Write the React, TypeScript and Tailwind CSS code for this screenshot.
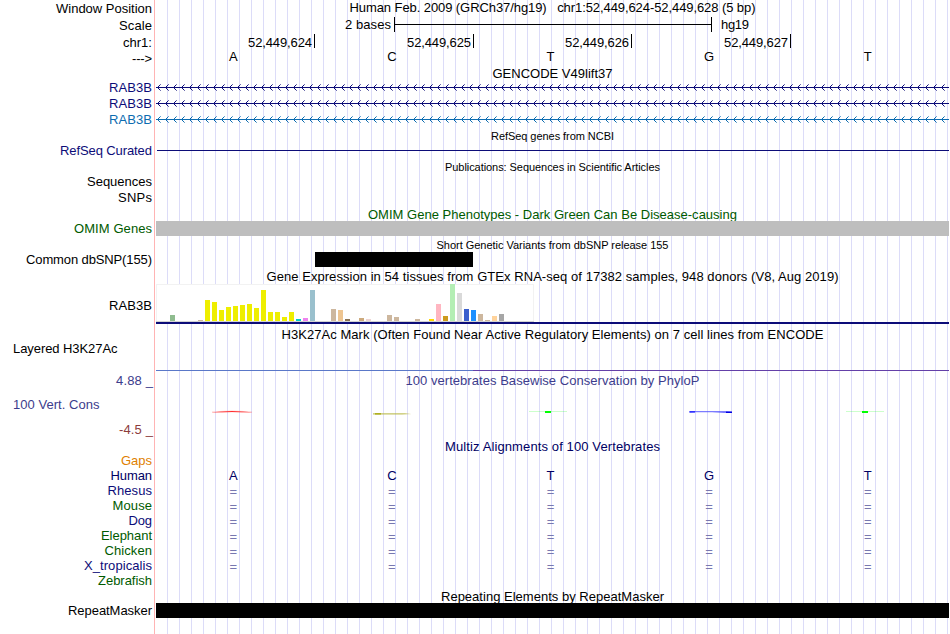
import { useLayoutEffect, useRef, type ReactNode } from "react";

/** Text whose letter spacing is adjusted so its advance equals `w` pixels. */
function Fit({ w, children, className = "" }: { w: number; children: string; className?: string }) {
  const ref = useRef<HTMLSpanElement>(null);
  useLayoutEffect(() => {
    const el = ref.current;
    if (!el) return;
    el.style.letterSpacing = "0px";
    el.style.marginRight = "0px";
    const natural = el.getBoundingClientRect().width;
    const gap = (w - natural) / (children.length - 1);
    el.style.letterSpacing = `${gap}px`;
    el.style.marginRight = `${-gap}px`;
  }, [w, children]);
  return (
    <span ref={ref} className={`inline-block shrink-0 whitespace-pre ${className}`}>
      {children}
    </span>
  );
}

type RowProps = {
  h: string;
  label?: string;
  w?: number;
  labelClass?: string;
  left?: boolean;
  clip?: boolean;
  children?: ReactNode;
};

function Row({ h, label, w = 0, labelClass = "", left = false, clip = false, children }: RowProps) {
  return (
    <div className={`flex w-[949px] shrink-0 ${h}`}>
      <div
        className={`flex w-[156px] shrink-0 items-start ${left ? "justify-start pl-[13px]" : "justify-end pr-1"} ${labelClass}`}
      >
        {label && <Fit w={w}>{label}</Fit>}
      </div>
      <div className={`flex w-[793px] shrink-0 items-start ${clip ? "overflow-hidden" : ""}`}>{children}</div>
    </div>
  );
}

function Title({ w, className = "", children }: { w: number; className?: string; children: string }) {
  return (
    <div className={`flex w-[793px] justify-center ${className}`}>
      <Fit w={w}>{children}</Fit>
    </div>
  );
}

function Bases({ items, className = "" }: { items: string[]; className?: string }) {
  return (
    <div className={`-ml-[2px] grid w-[793px] shrink-0 grid-cols-5 text-center ${className}`}>
      {items.map((b, i) => (
        <span key={i}>{b}</span>
      ))}
    </div>
  );
}

function Arrows({ color }: { color: string }) {
  const tips = Array.from({ length: 99 }, (_, i) => 1 + i * 8);
  return (
    <svg width="793" height="16" className="block" fill={color} shapeRendering="crispEdges">
      <rect x="0" y="7" width="793" height="1" />
      {tips.map((x) => (
        <g key={x}>
          <path d={`M${x + 1} 6h1v1h-1zM${x + 1} 8h1v1h-1zM${x + 2} 5h1v1h-1zM${x + 2} 9h1v1h-1z`} />
          <path d={`M${x + 3} 4h1v1h-1zM${x + 3} 10h1v1h-1z`} opacity="0.6" />
        </g>
      ))}
    </svg>
  );
}

const TAN = "#cdb79e";
const YEL = "#eeee00";
const tissues: [number, number, string][] = [
  [170, 6, "#8fbc8f"], [198, 1, TAN], [205, 21, YEL], [212, 19, YEL], [219, 11, YEL],
  [226, 14, YEL], [233, 15, YEL], [240, 16, YEL], [247, 17, YEL], [254, 13, YEL],
  [261, 31, YEL], [268, 9, YEL], [275, 9, YEL], [282, 4, YEL], [289, 9, YEL],
  [296, 2, "#00cdcd"], [303, 3, "#ee82ee"], [310, 31, "#9ac0cd"], [331, 12, TAN],
  [338, 11, "#eec591"], [345, 2, "#8b7355"], [359, 3, "#cdaa7d"], [366, 2, "#eed5d2"],
  [387, 6, TAN], [394, 4, TAN], [415, 2, TAN], [429, 2, "#ffd700"], [436, 17, "#ffb6c1"],
  [443, 5, "#cd9b1d"], [450, 37, "#b4eeb4"], [457, 28, "#d9d9d9"], [464, 12, "#3a5fcd"],
  [471, 11, "#1e90ff"], [478, 7, TAN], [485, 1, TAN], [492, 5, "#ffd39b"], [499, 7, "#a6a6a6"],
];

function Expression() {
  return (
    <svg width="793" height="41" className="block" shapeRendering="crispEdges">
      <rect x="0" y="0" width="378" height="38" fill="#f2f2f2" />
      <rect x="1" y="1" width="376" height="36" fill="#ffffff" />
      <rect x="0" y="37" width="378" height="1" fill="#d3d3d3" />
      {tissues.map(([x, h, c]) => (
        <rect key={x} x={x - 156} y={37 - h} width="5" height={h} fill={c} />
      ))}
      <rect x="0" y="38" width="793" height="2" fill="#0c0c78" />
    </svg>
  );
}

function Conservation() {
  return (
    <svg width="793" height="33" className="block">
      <path d="M56 23.2L66 22.4L76 22L86 22.4L96 23.2L86 23.2L76 22.9L66 23.3Z" fill="#ff3030" stroke="#ff3030" strokeWidth="0.2" />
      <path d="M217 24.2H255L249 25H256L246 25.5H217Z" fill="#b8b848" opacity="0.85" />
      <rect x="219" y="24" width="6" height="1.6" fill="#b0b020" />
      <rect x="373" y="22" width="38" height="1" fill="#00ff00" opacity="0.2" />
      <rect x="389" y="22" width="6" height="2" fill="#00ff00" />
      <path d="M533 22H570L576 22.4V24H568L556 23.3H539L533 23.8Z" fill="#5050ff" opacity="0.75" />
      <rect x="534" y="22" width="5" height="1.6" fill="#3030ff" />
      <rect x="570" y="22.6" width="6" height="1.4" fill="#0000e0" />
      <rect x="690" y="22" width="38" height="1" fill="#00ff00" opacity="0.2" />
      <rect x="706" y="22" width="6" height="2" fill="#00ff00" />
    </svg>
  );
}

const positions: [string, string][] = [
  ["52,449,624", "w-[159px]"],
  ["52,449,625", "w-[159px]"],
  ["52,449,626", "w-[158px]"],
  ["52,449,627", "w-[159px]"],
];
const sequence = ["A", "C", "T", "G", "T"];
const gapMarks = ["=", "=", "=", "=", "="];
const species: [string, number, string, boolean][] = [
  ["Rhesus", 44.5, "text-[#0c0c78]", true],
  ["Mouse", 39.5, "text-[#005a00]", true],
  ["Dog", 23.5, "text-[#0c0c78]", true],
  ["Elephant", 51, "text-[#005a00]", true],
  ["Chicken", 47.5, "text-[#005a00]", true],
  ["X_tropicalis", 68, "text-[#0c0c78]", true],
  ["Zebrafish", 54, "text-[#005a00]", false],
];

export default function App() {
  return (
    <div className="h-[634px] w-[950px] overflow-hidden bg-white font-['Liberation_Sans',Arial,sans-serif] text-[13px] leading-[15px] text-black">
      <div className="flex h-full w-[949px] flex-col bg-[linear-gradient(to_right,#fff_154px,#ffb4b4_154px,#ffb4b4_155px,#fff_155px,#fff_156px,transparent_156px),repeating-linear-gradient(to_right,#dcdcf8_0px,#dcdcf8_1px,#fff_1px,#fff_12px)] bg-no-repeat [background-position:0_0,155px_0]">
        <Row h="h-[17px]" label="Window Position" w={96} labelClass="pt-px">
          <Title w={406}>Human Feb. 2009 (GRCh37/hg19)   chr1:52,449,624-52,449,628 (5 bp)</Title>
        </Row>
        <Row h="h-[17px]" label="Scale" w={33} labelClass="pt-px">
          <div className="flex w-[238px] shrink-0 justify-end pr-[3px]">
            <Fit w={46}>2 bases</Fit>
          </div>
          <div className="flex h-[15px] w-[318px] shrink-0 items-center border-x border-black">
            <div className="h-px w-full bg-black" />
          </div>
          <div className="pl-[9px]">
            <Fit w={28}>hg19</Fit>
          </div>
        </Row>
        <Row h="h-[16px]" label="chr1:" w={29} labelClass="pt-px">
          {positions.map(([p, width]) => (
            <div key={p} className={`flex h-[14px] shrink-0 justify-end border-r border-black pr-[2px] pt-px ${width}`}>
              <Fit w={64}>{p}</Fit>
            </div>
          ))}
        </Row>
        <Row h="h-[16px]" label="--->" w={20} labelClass="pt-px">
          <Bases items={sequence} className="-mt-px" />
        </Row>
        <Row h="h-[14px]">
          <Title w={120}>GENCODE V49lift37</Title>
        </Row>
        <Row h="h-[16px]" label="RAB3B" w={43} labelClass="text-[#0c0c78]">
          <Arrows color="#0c0c78" />
        </Row>
        <Row h="h-[16px]" label="RAB3B" w={43} labelClass="text-[#0c0c78]">
          <Arrows color="#0c0c78" />
        </Row>
        <Row h="h-[16px]" label="RAB3B" w={43} labelClass="text-[#0c6cb0]">
          <Arrows color="#0c6cb0" />
        </Row>
        <Row h="h-[14px]">
          <Title w={123} className="pt-[2px] text-[11px] leading-[12px]">RefSeq genes from NCBI</Title>
        </Row>
        <Row h="h-[16px]" label="RefSeq Curated" w={92} labelClass="pt-px text-[#0c0c78]">
          <div className="ml-px mt-2 h-px w-[792px] bg-[#0c0c78]" />
        </Row>
        <Row h="h-[16px]">
          <Title w={215} className="pt-[3px] text-[11px] leading-[12px]">Publications: Sequences in Scientific Articles</Title>
        </Row>
        <Row h="h-[16px]" label="Sequences" w={65} />
        <Row h="h-[16px]" label="SNPs" w={34} />
        <Row h="h-[15px]" clip>
          <Title w={369} className="pt-px text-[#005a00]">OMIM Gene Phenotypes - Dark Green Can Be Disease-causing</Title>
        </Row>
        <Row h="h-[16px]" label="OMIM Genes" w={78} labelClass="text-[#005a00]">
          <div className="h-[15px] w-full bg-[#bebebe]" />
        </Row>
        <Row h="h-[15px]">
          <Title w={232} className="pt-[2px] text-[11px] leading-[12px]">Short Genetic Variants from dbSNP release 155</Title>
        </Row>
        <Row h="h-[15px]" label="Common dbSNP(155)" w={126}>
          <div className="ml-[159px] h-[15px] w-[158px] bg-black" />
        </Row>
        <Row h="h-[17px]">
          <Title w={572} className="pt-[2px]">Gene Expression in 54 tissues from GTEx RNA-seq of 17382 samples, 948 donors (V8, Aug 2019)</Title>
        </Row>
        <Row h="h-[41px]" label="RAB3B" w={43} labelClass="pt-[14px]">
          <Expression />
        </Row>
        <Row h="h-[16px]">
          <Title w={542} className="pt-[2px]">H3K27Ac Mark (Often Found Near Active Regulatory Elements) on 7 cell lines from ENCODE</Title>
        </Row>
        <Row h="h-[32px]" label="Layered H3K27Ac" w={104.5} left>
          <div className="mt-[29px] h-px w-[317px] bg-[#5a78c8]" />
          <div className="mt-[29px] h-px flex-1 bg-[#6440a8]" />
        </Row>
        <Row h="h-[16px]" label="4.88 _" w={37} labelClass="pr-[3px] text-[#3c3c8c]">
          <Title w={294} className="text-[#3c3c8c]">100 vertebrates Basewise Conservation by PhyloP</Title>
        </Row>
        <Row h="h-[33px]" label="100 Vert. Cons" w={86.5} left labelClass="pt-[8px] text-[#3c3c8c]">
          <Conservation />
        </Row>
        <Row h="h-[17px]" label="-4.5 _" w={34} labelClass="pr-[3px] text-[#8c3c3c]" />
        <Row h="h-[14px]">
          <Title w={215} className="text-[#000064]">Multiz Alignments of 100 Vertebrates</Title>
        </Row>
        <Row h="h-[15px]" label="Gaps" w={31} labelClass="text-[#e08000]" />
        <Row h="h-[15px]" label="Human" w={41.5} labelClass="text-[#000064]">
          <Bases items={sequence} className="text-[#000064]" />
        </Row>
        {species.map(([name, w, color, aligned]) => (
          <Row key={name} h="h-[15px]" label={name} w={w} labelClass={color}>
            {aligned && <Bases items={gapMarks} className="pt-px text-[#7878b0]" />}
          </Row>
        ))}
        <Row h="h-[15px]" clip>
          <Title w={223} className="pt-px">Repeating Elements by RepeatMasker</Title>
        </Row>
        <Row h="h-[15px]" label="RepeatMasker" w={84}>
          <div className="h-[15px] w-full bg-black" />
        </Row>
      </div>
    </div>
  );
}
